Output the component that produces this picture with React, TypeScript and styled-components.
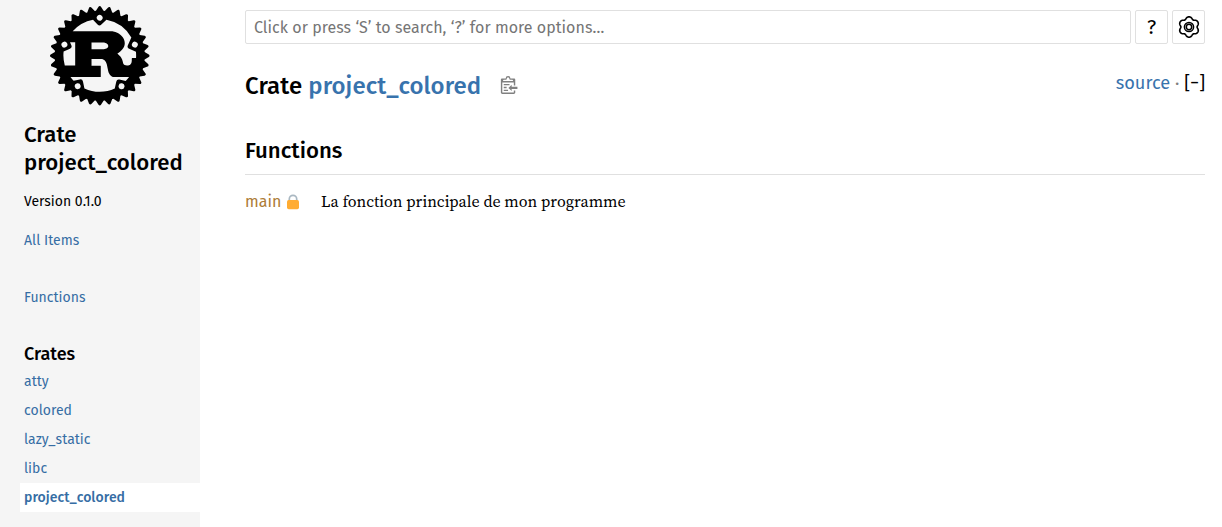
import React from "react";
import styled, { createGlobalStyle } from "styled-components";
import { SiRust } from "react-icons/si";

const GlobalStyle = createGlobalStyle`
  * { box-sizing: border-box; }
  body {
    margin: 0;
    background: #fff;
    color: #000;
    font: 16px/1.5 "Fira Sans", "Noto Sans", "Open Sans", sans-serif;
    overflow: hidden;
  }
  a { color: #3873ad; text-decoration: none; }
  h1, h2, h3, p, ul { margin: 0; padding: 0; }
  ul { list-style: none; }
`;

const Page = styled.div`
  display: flex;
  height: 527px;
`;

const Sidebar = styled.nav`
  flex: 0 0 200px;
  background: #f5f5f5;
  overflow: hidden;
`;

const Logo = styled.a`
  display: flex;
  justify-content: center;
  padding-top: 6px;
  height: 121px;
  color: #000;
`;

const SidebarTitle = styled.h2`
  padding-left: 24px;
  font-size: 22.2px;
  line-height: 28px;
  font-weight: 500;
`;

const Version = styled.p`
  margin-top: 14px;
  padding-left: 24px;
  font-size: 14px;
  line-height: 22px;
`;

const SidebarLink = styled.a<{ $gap?: number; $current?: boolean }>`
  display: block;
  height: 29px;
  margin: ${(p) => p.$gap ?? 0}px 0 0 20px;
  padding-left: 4px;
  font-size: 14px;
  line-height: 29px;
  letter-spacing: ${(p) => (p.$current ? 0.06 : 0.02)}px;
  font-weight: ${(p) => (p.$current ? 500 : 400)};
  background: ${(p) => (p.$current ? "#fff" : "transparent")};
  color: #356da4;
`;

const SidebarHeading = styled.h3`
  margin: 30px 0 0 24px;
  font-size: 18px;
  line-height: 25px;
  font-weight: 500;
`;

const Main = styled.main`
  flex: 1;
  padding: 10px 17px 0 45px;
`;

const SearchBar = styled.form`
  display: flex;
  gap: 4px;
  height: 34px;
`;

const SearchInput = styled.input`
  flex: 1;
  border: 1px solid #e0e0e0;
  border-radius: 2px;
  padding: 1px 8px 0;
  outline: none;
  font: inherit;
  letter-spacing: 0.04px;
  &::placeholder { color: #757575; opacity: 1; }
`;

const ToolButton = styled.button`
  display: flex;
  align-items: center;
  justify-content: center;
  width: 33px;
  padding: 0;
  border: 1px solid #e0e0e0;
  border-radius: 2px;
  background: #fff;
  color: #000;
  font: inherit;
  font-size: 20px;
  font-weight: 400;
`;

const Heading = styled.div`
  display: flex;
  justify-content: space-between;
  margin-top: 23px;
  height: 38px;
`;

const Title = styled.h1`
  display: flex;
  align-items: center;
  font-size: 24px;
  line-height: 38px;
  font-weight: 500;
  letter-spacing: 0.08px;
  white-space: pre;
`;

const CopyButton = styled.button`
  display: flex;
  margin: -2px 0 0 19px;
  padding: 0;
  border: 0;
  background: none;
  color: #808080;
`;

const Actions = styled.div`
  font-size: 18.2px;
  line-height: 32px;
  white-space: pre;
  color: #808080;
`;

const Toggle = styled.span`
  color: #000;
`;

const SectionTitle = styled.h2`
  margin-top: 24px;
  height: 46px;
  border-bottom: 1px solid #e0e0e0;
  font-size: 22.2px;
  line-height: 43px;
  font-weight: 500;
`;

const ItemRow = styled.div`
  display: flex;
  margin-top: 13px;
  line-height: 27px;
`;

const ItemName = styled.div`
  display: flex;
  align-items: center;
  gap: 5px;
  width: 76px;
  a { color: #ad7c37; }
`;

const Description = styled.p`
  font-family: "Source Serif 4", "Liberation Serif", serif;
  font-size: 16px;
`;

const wheelOutline = (() => {
  const points = Array.from({ length: 120 }, (_, i) => {
    const t = (i / 120) * Math.PI * 2;
    const r = 9.3 + 1.05 * Math.cos(6 * t) - 0.15 * Math.cos(12 * t);
    return `${(12 + r * Math.sin(t)).toFixed(2)} ${(12 - r * Math.cos(t)).toFixed(2)}`;
  });
  return `M${points.join("L")}Z`;
})();

const WheelIcon = () => (
  <svg width="24" height="24" viewBox="0 0 24 24" fill="none" stroke="#000">
    <path d={wheelOutline} strokeWidth="1.6" strokeLinejoin="round" />
    <circle cx="12" cy="12" r="4.6" strokeWidth="1.5" />
    <circle cx="12" cy="12" r="2.7" strokeWidth="1.5" />
  </svg>
);

const ClipboardIcon = () => (
  <svg width="19" height="18" viewBox="0 0 24 25" fill="currentColor">
    <path d="M18 20h2v3c0 1-1 2-2 2H2c-.998 0-2-1-2-2V5c0-.911.755-1.667 1.667-1.667h5A3.323 3.323 0 0110 0a3.323 3.323 0 013.333 3.333h5C19.245 3.333 20 4.09 20 5v8.333h-2V9H2v14h16v-3zM3 7h14c0-.911-.793-1.667-1.75-1.667H13.5c-.957 0-1.75-.755-1.75-1.666C11.75 2.755 10.957 2 10 2s-1.75.755-1.75 1.667c0 .911-.793 1.666-1.75 1.666H4.75C3.793 5.333 3 6.09 3 7z" />
    <path d="M4 19h6v2H4zM12 11H4v2h8zM4 17h4v-2H4zM15 15v-3l-4.5 4.5L15 21v-3l8.027-.032L23 15z" />
  </svg>
);

const LockIcon = () => (
  <svg width="14" height="16" viewBox="0 0 14 16">
    <path d="M3.3 8V5a3.7 3.7 0 0 1 7.4 0v3" fill="none" stroke="#aab8c2" strokeWidth="1.7" />
    <rect x="1" y="6" width="12" height="9.3" rx="1.7" fill="#ffac33" />
  </svg>
);

const crates = ["atty", "colored", "lazy_static", "libc", "project_colored"];

export default function App() {
  return (
    <Page>
      <GlobalStyle />
      <Sidebar>
        <Logo href="#"><SiRust size={99.5} /></Logo>
        <SidebarTitle>Crate<br />project_colored</SidebarTitle>
        <Version>Version 0.1.0</Version>
        <SidebarLink href="#" $gap={13}>All Items</SidebarLink>
        <SidebarLink href="#" $gap={28}>Functions</SidebarLink>
        <SidebarHeading>Crates</SidebarHeading>
        <ul>
          {crates.map((name) => (
            <li key={name}>
              <SidebarLink href="#" $current={name === "project_colored"}>{name}</SidebarLink>
            </li>
          ))}
        </ul>
      </Sidebar>
      <Main>
        <SearchBar>
          <SearchInput placeholder="Click or press ‘S’ to search, ‘?’ for more options…" />
          <ToolButton type="button">?</ToolButton>
          <ToolButton type="button"><WheelIcon /></ToolButton>
        </SearchBar>
        <Heading>
          <Title>
            <span>Crate </span><a href="#">project_colored</a>
            <CopyButton><ClipboardIcon /></CopyButton>
          </Title>
          <Actions><a href="#">source</a> · <Toggle>[−]</Toggle></Actions>
        </Heading>
        <SectionTitle>Functions</SectionTitle>
        <ItemRow>
          <ItemName><a href="#">main</a><LockIcon /></ItemName>
          <Description>La fonction principale de mon programme</Description>
        </ItemRow>
      </Main>
    </Page>
  );
}
